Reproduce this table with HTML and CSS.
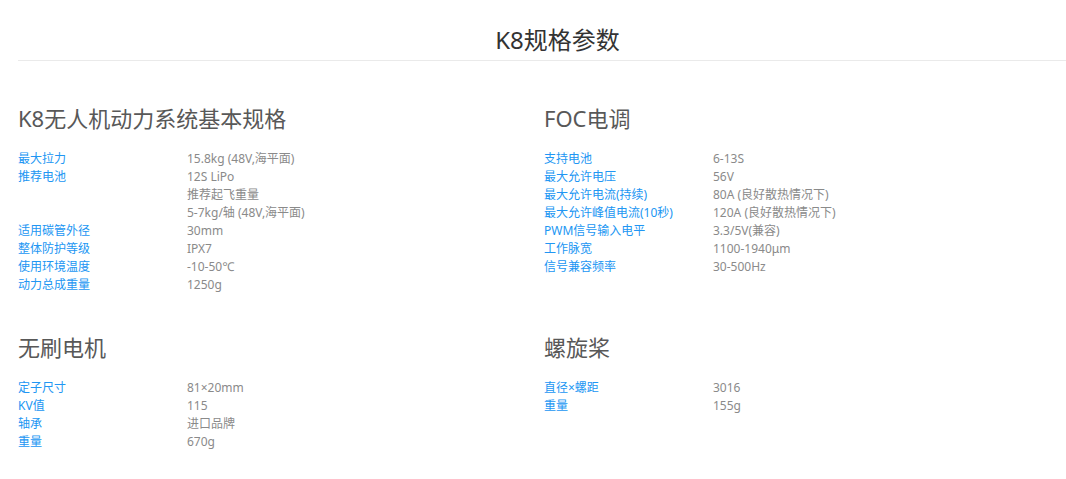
FILE: index.html
```html
<!DOCTYPE html>
<html lang="zh-CN">
<head>
<meta charset="utf-8">
<title>K8规格参数</title>
<link rel="stylesheet" href="styles.css">
</head>
<body>
<div class="page">
  <h1 class="title">K8规格参数</h1>
  <div class="grid">
    <section class="sec">
      <h2 class="sec-title">K8无人机动力系统基本规格</h2>
      <dl class="specs">
        <dt>最大拉力</dt><dd>15.8kg (48V,海平面)</dd>
        <dt>推荐电池</dt><dd>12S LiPo</dd>
        <dt></dt><dd>推荐起飞重量</dd>
        <dt></dt><dd>5-7kg/轴 (48V,海平面)</dd>
        <dt>适用碳管外径</dt><dd>30mm</dd>
        <dt>整体防护等级</dt><dd>IPX7</dd>
        <dt>使用环境温度</dt><dd>-10-50℃</dd>
        <dt>动力总成重量</dt><dd>1250g</dd>
      </dl>
    </section>
    <section class="sec">
      <h2 class="sec-title">FOC电调</h2>
      <dl class="specs">
        <dt>支持电池</dt><dd>6-13S</dd>
        <dt>最大允许电压</dt><dd>56V</dd>
        <dt>最大允许电流(持续)</dt><dd>80A (良好散热情况下)</dd>
        <dt>最大允许峰值电流(10秒)</dt><dd>120A (良好散热情况下)</dd>
        <dt>PWM信号输入电平</dt><dd>3.3/5V(兼容)</dd>
        <dt>工作脉宽</dt><dd>1100-1940μm</dd>
        <dt>信号兼容频率</dt><dd>30-500Hz</dd>
      </dl>
    </section>
    <section class="sec">
      <h2 class="sec-title">无刷电机</h2>
      <dl class="specs">
        <dt>定子尺寸</dt><dd>81×20mm</dd>
        <dt>KV值</dt><dd>115</dd>
        <dt>轴承</dt><dd>进口品牌</dd>
        <dt>重量</dt><dd>670g</dd>
      </dl>
    </section>
    <section class="sec">
      <h2 class="sec-title">螺旋桨</h2>
      <dl class="specs">
        <dt>直径×螺距</dt><dd>3016</dd>
        <dt>重量</dt><dd>155g</dd>
      </dl>
    </section>
  </div>
</div>
</body>
</html>
```
FILE: styles.css
```css
html, body {
  margin: 0;
  padding: 0;
  background: #fff;
  overflow: hidden;
}
body {
  font-family: "Noto Sans", "Noto Sans CJK SC", sans-serif;
}
.page {
  margin-left: 18px;
  width: 1079px;
}
.title {
  margin: 0;
  padding: 25px 0 5px;
  font-size: 24px;
  line-height: 30px;
  font-weight: 400;
  color: #333;
  text-align: center;
  border-bottom: 1px solid #eaeaea;
}
.grid {
  display: grid;
  grid-template-columns: 526px 526px;
  row-gap: 38px;
  margin-top: 42px;
}
.sec-title {
  margin: 0 0 17px;
  font-size: 22px;
  line-height: 30px;
  font-weight: 400;
  color: #585858;
}
.specs {
  display: grid;
  grid-template-columns: 169px auto;
  margin: 0;
  font-size: 12px;
  line-height: 18px;
}
.specs dt {
  color: #2196f3;
  min-height: 18px;
}
.specs dd {
  margin: 0;
  color: #8a8a8a;
}
```
